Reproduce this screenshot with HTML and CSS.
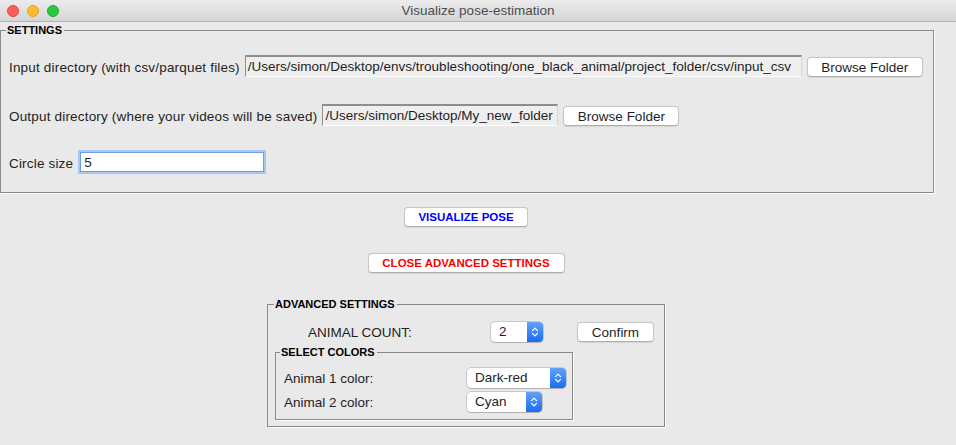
FILE: index.html
```html
<!DOCTYPE html>
<html>
<head>
<meta charset="utf-8">
<link rel="stylesheet" href="styles.css">
</head>
<body>
<div class="titlebar">
  <div class="lights">
    <span class="light red"></span>
    <span class="light yellow"></span>
    <span class="light green"></span>
  </div>
  <div class="title">Visualize pose-estimation</div>
  <div></div>
</div>
<div class="window">
  <fieldset class="group settings">
    <legend>SETTINGS</legend>
    <div class="row r1">
      <span class="lbl">Input directory (with csv/parquet files)</span>
      <div class="entry ro in">/Users/simon/Desktop/envs/troubleshooting/one_black_animal/project_folder/csv/input_csv</div>
      <button class="btn browse">Browse Folder</button>
    </div>
    <div class="row r2">
      <span class="lbl">Output directory (where your videos will be saved)</span>
      <div class="entry ro out">/Users/simon/Desktop/My_new_folder</div>
      <button class="btn browse">Browse Folder</button>
    </div>
    <div class="row r3">
      <span class="lbl">Circle size</span>
      <div class="entry focus">5</div>
    </div>
  </fieldset>

  <div class="actions">
    <button class="btn action visualize">VISUALIZE POSE</button>
    <button class="btn action close">CLOSE ADVANCED SETTINGS</button>

    <fieldset class="group advanced">
      <legend>ADVANCED SETTINGS</legend>
      <div class="count-row">
        <span class="count-lbl">ANIMAL COUNT:</span>
        <div class="combo c-count"><span class="val">2</span><span class="arr"><svg width="8" height="12" viewBox="0 0 8 12"><path d="M1.5 4.6 L4 2.1 L6.5 4.6 M1.5 7.4 L4 9.9 L6.5 7.4" fill="none" stroke="#fff" stroke-width="1.3" stroke-linecap="round" stroke-linejoin="round"/></svg></span></div>
        <button class="btn confirm">Confirm</button>
      </div>
      <fieldset class="group colors">
        <legend>SELECT COLORS</legend>
        <div class="color-row">
          <span class="color-lbl">Animal 1 color:</span>
          <div class="combo c-red"><span class="val">Dark-red</span><span class="arr"><svg width="8" height="12" viewBox="0 0 8 12"><path d="M1.5 4.6 L4 2.1 L6.5 4.6 M1.5 7.4 L4 9.9 L6.5 7.4" fill="none" stroke="#fff" stroke-width="1.3" stroke-linecap="round" stroke-linejoin="round"/></svg></span></div>
        </div>
        <div class="color-row second">
          <span class="color-lbl">Animal 2 color:</span>
          <div class="combo c-cyan"><span class="val">Cyan</span><span class="arr"><svg width="8" height="12" viewBox="0 0 8 12"><path d="M1.5 4.6 L4 2.1 L6.5 4.6 M1.5 7.4 L4 9.9 L6.5 7.4" fill="none" stroke="#fff" stroke-width="1.3" stroke-linecap="round" stroke-linejoin="round"/></svg></span></div>
        </div>
      </fieldset>
    </fieldset>
  </div>
</div>
</body>
</html>
```

FILE: styles.css
```css
html, body {
  margin: 0;
  padding: 0;
}
body {
  width: 956px;
  height: 445px;
  overflow: hidden;
  background: #e9e9e9;
  font-family: "Liberation Sans", Arial, sans-serif;
  font-size: 13.5px;
  color: #1e1e1e;
}

/* title bar */
.titlebar {
  height: 21px;
  border-bottom: 1px solid #b4b4b4;
  background: linear-gradient(#ececec, #d5d5d5);
  display: grid;
  grid-template-columns: 1fr auto 1fr;
  align-items: center;
}
.lights {
  display: flex;
  gap: 8px;
  padding-left: 7px;
}
.light {
  width: 12px;
  height: 12px;
  border-radius: 50%;
  box-sizing: border-box;
}
.light.red { background: #fe5f57; border: 0.5px solid #e0443e; }
.light.yellow { background: #febc2e; border: 0.5px solid #dea123; }
.light.green { background: #28c840; border: 0.5px solid #1aab29; }
.title {
  font-size: 13.5px;
  color: #4d4d4d;
}

/* main */
.window {
  width: 934px;
  padding-top: 2px;
  display: flex;
  flex-direction: column;
}

fieldset.group {
  margin: 0;
  min-width: 0;
  border: 1px solid #8a8a8a;
  box-shadow: 1px 1px 0 #ffffff;
}
fieldset.group > legend {
  font-size: 11px;
  line-height: 13px;
  font-weight: bold;
  color: #000;
  padding: 0 2px 0 1px;
}

.settings {
  width: 934px;
  box-sizing: border-box;
  padding: 17px 0 18px 5px;
}
.row {
  display: flex;
  align-items: center;
  height: 24px;
  gap: 5px;
  padding-left: 3px;
}
.row.r2 { margin-top: 25px; }
.row.r3 { margin-top: 23px; }
.lbl {
  padding-top: 3px;
  white-space: nowrap;
  letter-spacing: 0.18px;
}

.entry {
  box-sizing: border-box;
  white-space: nowrap;
  overflow: hidden;
}
.entry.ro {
  height: 22px;
  border-top: 2px solid #8e8e8e;
  border-left: 1px solid #8e8e8e;
  border-right: 1px solid #d6d6d6;
  border-bottom: 1px solid #ffffff;
  background: #efefef;
  padding: 0 2px;
  line-height: 19px;
}
.entry.in { width: 557px; }
.entry.out { width: 236px; }
.entry.focus {
  width: 184px;
  height: 20px;
  margin: 0 2px;
  border: 1px solid #6c9de6;
  box-shadow: 0 0 0 2px #a9c7f1;
  background: #ffffff;
  padding-left: 3px;
  line-height: 19px;
}

.btn {
  font-family: inherit;
  font-size: 13.5px;
  color: #1e1e1e;
  height: 20px;
  box-sizing: border-box;
  padding: 0;
  background: #ffffff;
  border: 1px solid #c6c6c6;
  border-bottom-color: #aeaeae;
  border-radius: 4px;
  box-shadow: 0 0.5px 1px rgba(0,0,0,0.08);
}
.browse {
  width: 116px;
  margin-top: 2px;
}

.actions {
  width: 932px;
  display: flex;
  flex-direction: column;
  align-items: center;
}
.btn.action {
  font-size: 11.5px;
  font-weight: bold;
}
.visualize {
  width: 124px;
  margin-top: 14px;
  color: #0000ff;
}
.close {
  width: 197px;
  margin-top: 26px;
  color: #ff0000;
}

.advanced {
  width: 398px;
  box-sizing: border-box;
  margin-top: 25px !important;
  padding: 11px 0 6px 6px;
}
.count-row {
  display: flex;
  align-items: center;
  height: 20px;
}
.count-lbl {
  width: 217px;
  box-sizing: border-box;
  padding-left: 34px;
  white-space: nowrap;
}
.confirm {
  width: 77px;
  margin-left: 34px;
}

.colors {
  width: 298px;
  box-sizing: border-box;
  margin: 4px 0 0 1px !important;
  padding: 9px 0 7px 4px;
}
.color-row {
  display: flex;
  align-items: center;
  height: 20px;
  padding-left: 4px;
}
.color-row.second { margin-top: 4px; }
.color-lbl {
  width: 183px;
  white-space: nowrap;
}

.combo {
  display: flex;
  height: 20px;
  border-radius: 4px;
  background: #ffffff;
  box-shadow: 0 0 0 0.5px rgba(0,0,0,0.28), 0 1px 1px rgba(0,0,0,0.12);
}
.combo .val {
  flex: 1;
  padding-left: 8px;
  line-height: 20px;
  white-space: nowrap;
}
.combo .arr {
  width: 16px;
  border-radius: 0 4px 4px 0;
  background: linear-gradient(#62a2fa, #1a6cf1);
  display: flex;
  align-items: center;
  justify-content: center;
}
.c-count { width: 52px; }
.c-red { width: 99px; }
.c-cyan { width: 75px; }
```
